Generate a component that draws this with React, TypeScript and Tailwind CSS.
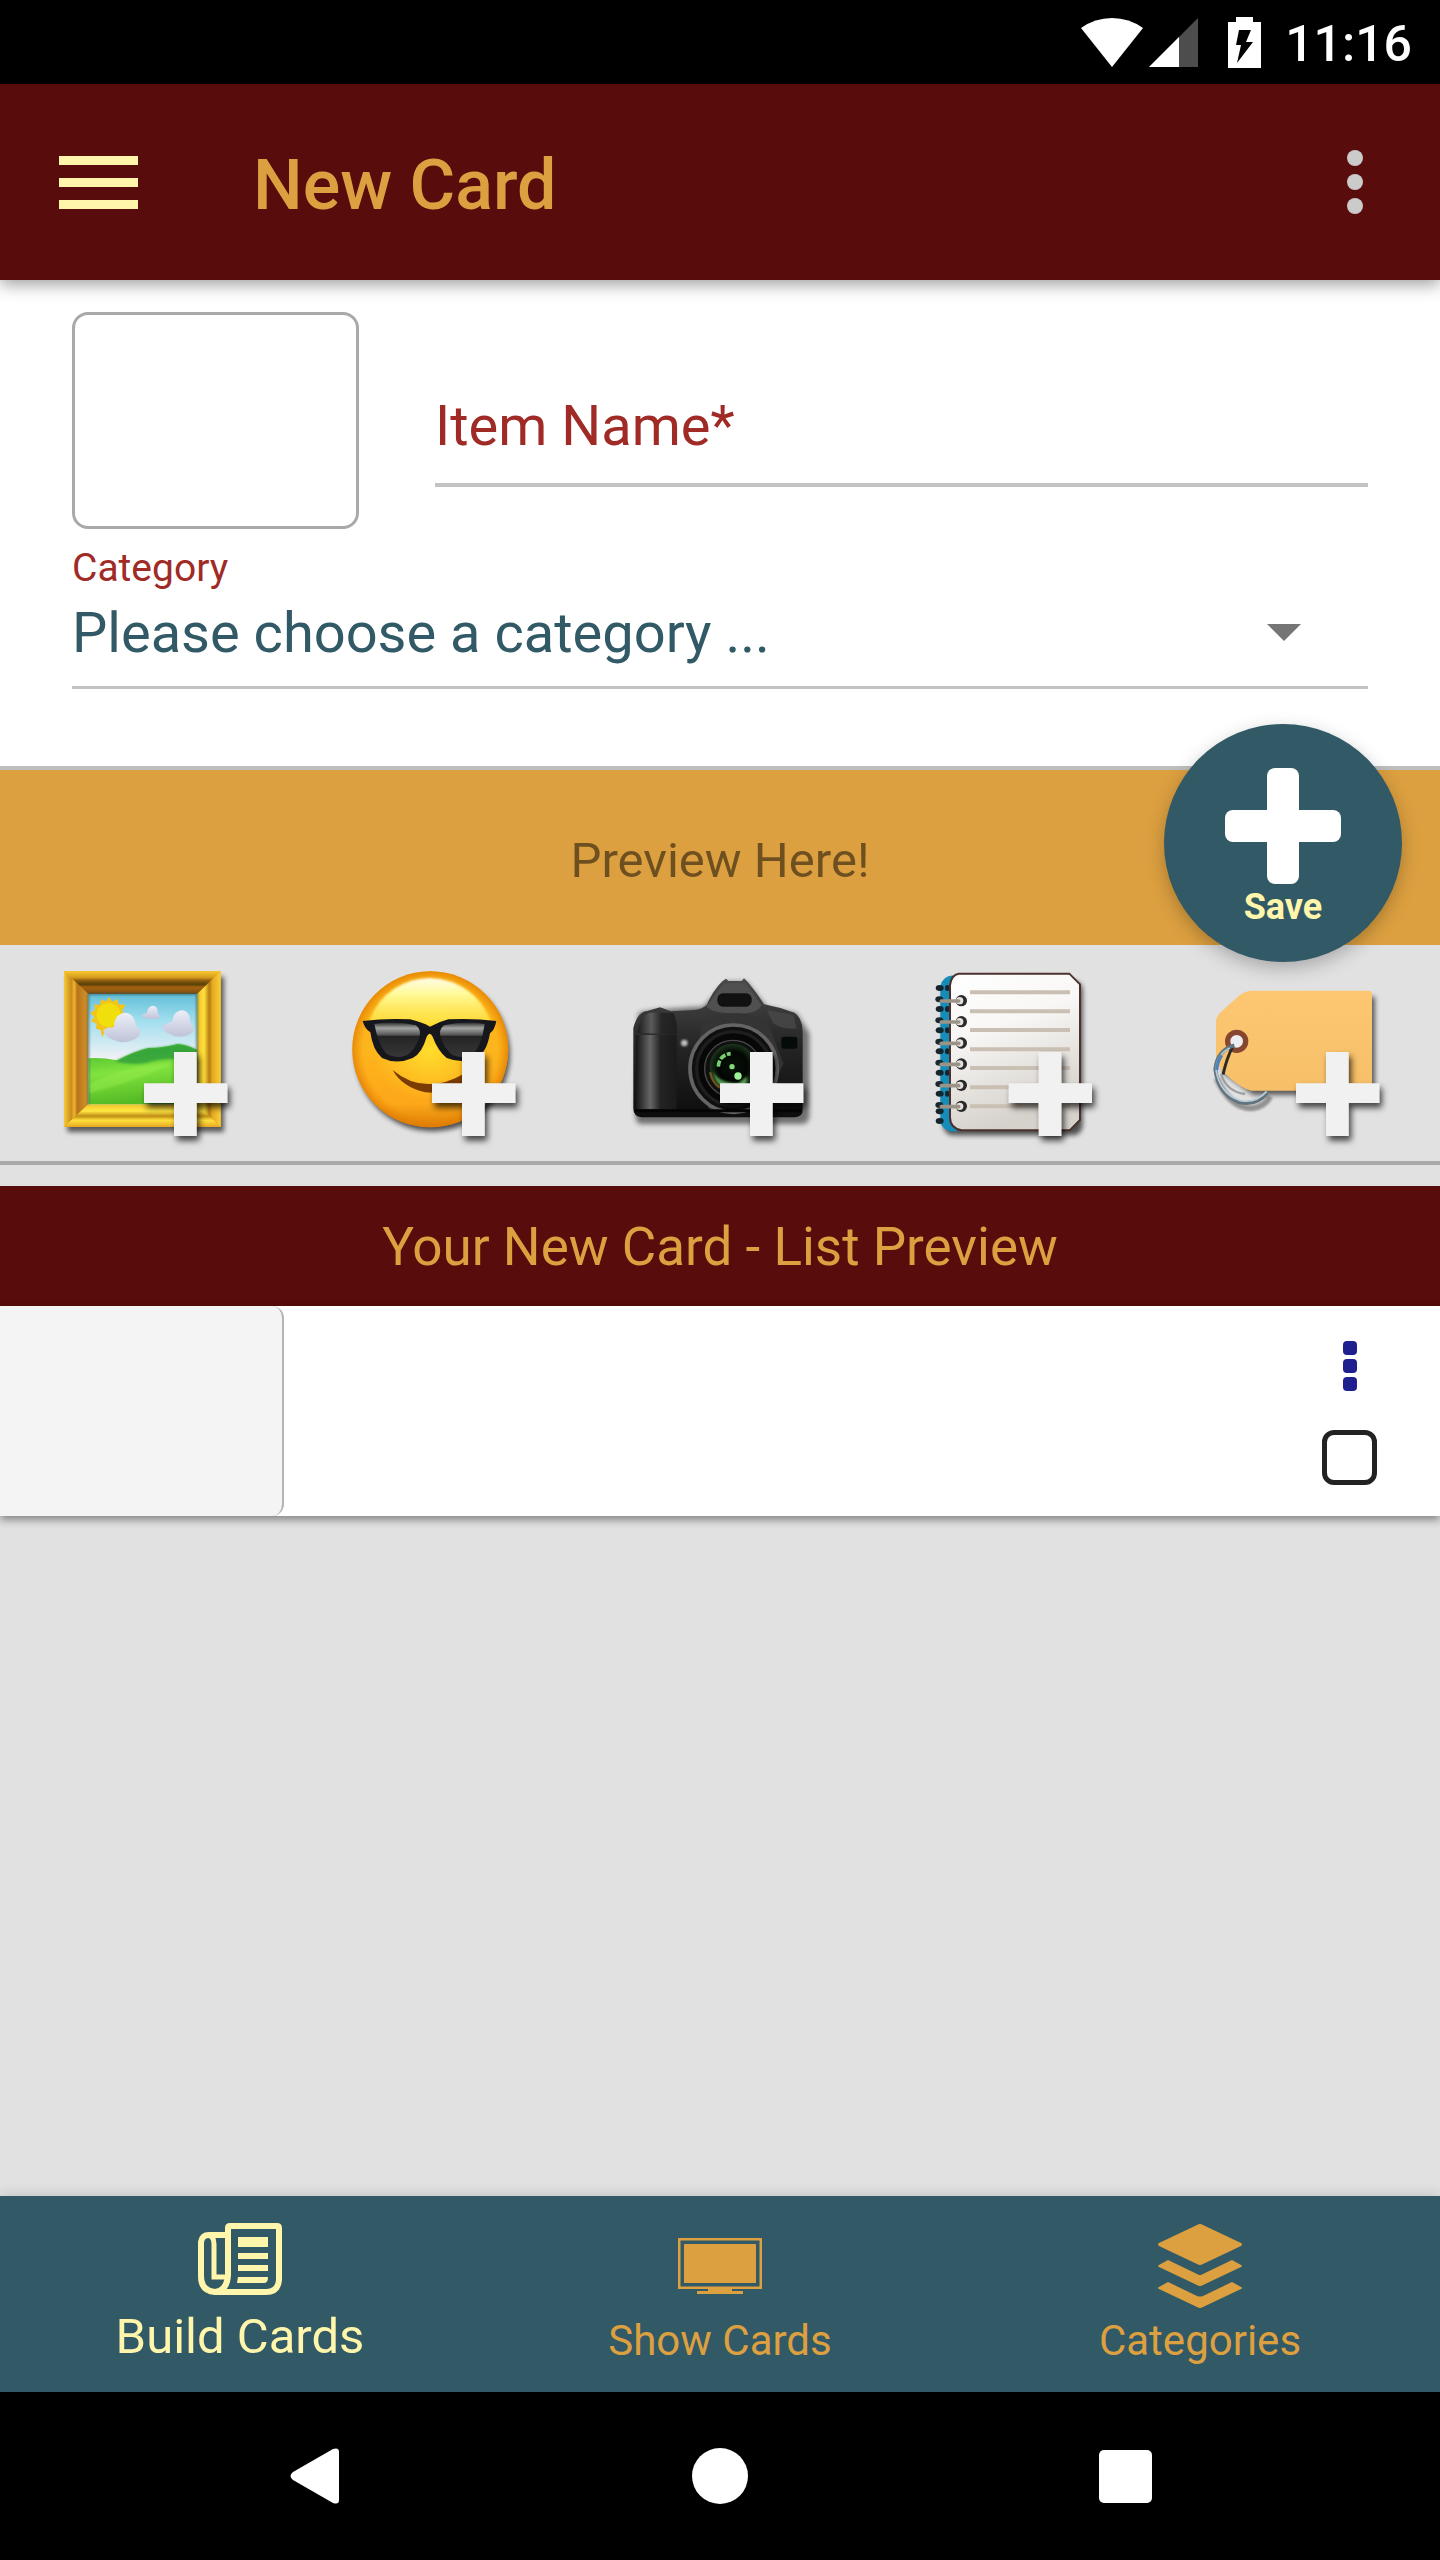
import React from "react";

function StatusBar() {
  return (
    <div className="flex h-[84px] shrink-0 items-center justify-end bg-black pr-7 text-white">
      <svg className="h-[51px] w-[180px]" viewBox="0 0 180 51" aria-hidden="true">
        <path d="M0 11 Q14 1 31 1 Q48 1 62 11 L31 50 Z" fill="#fff" />
        <path d="M117 1 V50 H68 Z" fill="#4d4d4d" />
        <path d="M98 20 V50 H68 Z" fill="#fff" />
        <path d="M147 5 H155 V0 H172 V5 H180 V51 H147 Z" fill="#fff" />
        <path d="M158 13 H170 L165 25 H172 L156 46 L160 28 H155 Z" fill="#000" />
      </svg>
      <span className="ml-6 pt-1 text-[50px] leading-none font-medium">11:16</span>
    </div>
  );
}

function Header() {
  return (
    <header className="relative z-10 flex h-[196px] shrink-0 items-center bg-[#580c0b] pr-[69px] pl-[59px] shadow-[0_4px_16px_rgba(0,0,0,0.4)]">
      <button type="button" aria-label="Open menu" className="flex w-[79px] flex-col gap-[13px]">
        <span className="h-[9px] bg-[#fff6ac]" />
        <span className="h-[9px] bg-[#fff6ac]" />
        <span className="h-[9px] bg-[#fff6ac]" />
      </button>
      <h1 className="ml-[115px] flex-1 pt-[6px] text-[70px] leading-none font-medium text-[#dda040]">New Card</h1>
      <button type="button" aria-label="More options" className="flex w-8 flex-col items-center gap-2">
        <span className="size-4 rounded-full bg-[#cbcbcb]" />
        <span className="size-4 rounded-full bg-[#cbcbcb]" />
        <span className="size-4 rounded-full bg-[#cbcbcb]" />
      </button>
    </header>
  );
}

function CardForm() {
  return (
    <form className="flex flex-col bg-white px-[72px] pt-8 pb-[77px]">
      <div className="flex items-end gap-[76px]">
        <button
          type="button"
          aria-label="Card image"
          className="h-[217px] w-[287px] shrink-0 rounded-2xl border-[3px] border-[#a9a9a9]"
        />
        <input
          id="item-name"
          type="text"
          aria-label="Item Name"
          placeholder="Item Name*"
          className="mb-[42px] h-[106px] min-w-0 flex-1 border-b-4 border-[#c3c3c3] pb-3 text-[56px] text-[#a02a26] outline-none placeholder:text-[#a02a26]"
        />
      </div>
      <label htmlFor="category" className="mt-4 text-[39px] leading-[46px] text-[#a02a26]">Category</label>
      <div className="relative flex">
        <select
          id="category"
          className="h-[98px] w-full appearance-none border-b-[3px] border-[#c3c3c3] bg-white pb-[11px] text-[56px] text-[#325966] outline-none"
        >
          <option>Please choose a category ...</option>
        </select>
        <svg className="pointer-events-none absolute top-[33px] right-[67px] h-[17px] w-[34px]" viewBox="0 0 34 17" aria-hidden="true">
          <path d="M0 0 H34 L17 17 Z" fill="#757575" />
        </svg>
      </div>
    </form>
  );
}

function SaveButton() {
  return (
    <button
      type="button"
      className="absolute -top-[46px] right-[38px] z-10 flex size-[238px] flex-col items-center rounded-full bg-[#325966] pt-11 shadow-[0_6px_18px_rgba(0,0,0,0.25)]"
    >
      <svg className="size-[116px]" viewBox="0 0 116 116" aria-hidden="true">
        <rect x="42" width="32" height="116" rx="8" fill="#fff" />
        <rect y="42" width="116" height="32" rx="8" fill="#fff" />
      </svg>
      <span className="text-[36px] leading-[46px] font-bold text-[#fff6ac]">Save</span>
    </button>
  );
}

function Plus({ x }: { x: number }) {
  return (
    <path
      transform={`translate(${x} 306)`}
      d="M90 0 H158 V94 H250 V153 H158 V252 H90 V153 H0 V94 H90 Z"
      fill="#f1f1f1"
      filter="url(#drop)"
    />
  );
}

function SharedDefs() {
  return (
    <svg className="absolute size-0" aria-hidden="true">
      <defs>
        <filter id="drop" x="-20%" y="-20%" width="150%" height="150%">
          <feDropShadow dx="8" dy="14" stdDeviation="9" floodColor="#000" floodOpacity="0.7" />
        </filter>
        <filter id="soft" x="-20%" y="-20%" width="140%" height="140%">
          <feGaussianBlur stdDeviation="3" />
        </filter>
        <filter id="softer" x="-30%" y="-30%" width="160%" height="160%">
          <feGaussianBlur stdDeviation="8" />
        </filter>
        <linearGradient id="frameL" x1="0" x2="1">
          <stop offset="0" stopColor="#f5ca38" />
          <stop offset="0.3" stopColor="#c98c1c" />
          <stop offset="0.42" stopColor="#f0b52b" />
          <stop offset="0.55" stopColor="#b8741b" />
          <stop offset="1" stopColor="#d8952b" />
        </linearGradient>
        <linearGradient id="frameR" x1="0" x2="1">
          <stop offset="0" stopColor="#eebf27" />
          <stop offset="0.3" stopColor="#ffe13a" />
          <stop offset="0.52" stopColor="#b77b13" />
          <stop offset="0.65" stopColor="#e3a923" />
          <stop offset="1" stopColor="#fbce36" />
        </linearGradient>
        <linearGradient id="frameT" x1="0" x2="0" y1="0" y2="1">
          <stop offset="0" stopColor="#f7c832" />
          <stop offset="0.28" stopColor="#d69a1d" />
          <stop offset="0.42" stopColor="#8c5c0e" />
          <stop offset="0.58" stopColor="#594009" />
          <stop offset="0.7" stopColor="#a3610f" />
          <stop offset="1" stopColor="#80500e" />
        </linearGradient>
        <linearGradient id="frameB" x1="0" x2="0" y1="0" y2="1">
          <stop offset="0" stopColor="#f0c429" />
          <stop offset="0.3" stopColor="#ffe844" />
          <stop offset="0.52" stopColor="#c08c15" />
          <stop offset="0.7" stopColor="#ffe13c" />
          <stop offset="1" stopColor="#e6a722" />
        </linearGradient>
        <linearGradient id="sky" x1="0" x2="0" y1="0" y2="1">
          <stop offset="0" stopColor="#62bfd8" />
          <stop offset="0.25" stopColor="#a3dfef" />
          <stop offset="0.6" stopColor="#f3f2f5" />
        </linearGradient>
        <linearGradient id="grass" x1="0" x2="0.2" y1="0" y2="1">
          <stop offset="0" stopColor="#43b52c" />
          <stop offset="0.5" stopColor="#81e33e" />
          <stop offset="1" stopColor="#55bb25" />
        </linearGradient>
        <linearGradient id="cloud" x1="0" x2="0" y1="0" y2="1">
          <stop offset="0" stopColor="#eceef8" />
          <stop offset="1" stopColor="#bfc3d8" />
        </linearGradient>
        <linearGradient id="face" x1="0" x2="0" y1="0" y2="1">
          <stop offset="0" stopColor="#fcb414" />
          <stop offset="0.5" stopColor="#fdb51d" />
          <stop offset="0.85" stopColor="#fda719" />
          <stop offset="1" stopColor="#dc7f06" />
        </linearGradient>
        <radialGradient id="faceGlow">
          <stop offset="0" stopColor="#ffdc2c" />
          <stop offset="1" stopColor="#ffdc2c" stopOpacity="0" />
        </radialGradient>
        <radialGradient id="faceEdge">
          <stop offset="0.86" stopColor="#e98706" stopOpacity="0" />
          <stop offset="1" stopColor="#e07a02" stopOpacity="0.75" />
        </radialGradient>
        <linearGradient id="shine" x1="0" x2="0" y1="0" y2="1">
          <stop offset="0" stopColor="#fffde6" />
          <stop offset="0.35" stopColor="#fffa96" />
          <stop offset="1" stopColor="#ffec43" stopOpacity="0.6" />
        </linearGradient>
        <linearGradient id="lens" x1="0" x2="0" y1="0" y2="1">
          <stop offset="0" stopColor="#2d2e2e" />
          <stop offset="0.16" stopColor="#a3a5a3" />
          <stop offset="0.36" stopColor="#555" />
          <stop offset="0.4" stopColor="#242424" />
          <stop offset="1" stopColor="#373737" />
        </linearGradient>
        <linearGradient id="body" x1="0" x2="0" y1="0" y2="1">
          <stop offset="0" stopColor="#4b4b4b" />
          <stop offset="0.5" stopColor="#242424" />
          <stop offset="1" stopColor="#0d0d0d" />
        </linearGradient>
        <linearGradient id="grip" x1="0" x2="1">
          <stop offset="0" stopColor="#161616" />
          <stop offset="0.35" stopColor="#666" />
          <stop offset="0.6" stopColor="#242424" />
          <stop offset="1" stopColor="#1a1a1a" />
        </linearGradient>
        <radialGradient id="glass">
          <stop offset="0" stopColor="#071208" />
          <stop offset="0.65" stopColor="#030603" />
          <stop offset="1" stopColor="#1c361b" />
        </radialGradient>
        <linearGradient id="paper" x1="0" x2="0.3" y1="0" y2="1">
          <stop offset="0" stopColor="#fff" />
          <stop offset="0.4" stopColor="#f8f7f5" />
          <stop offset="1" stopColor="#d5d1cb" />
        </linearGradient>
        <linearGradient id="tag" x1="0" x2="0" y1="0" y2="1">
          <stop offset="0" stopColor="#fdc772" />
          <stop offset="1" stopColor="#f6bf68" />
        </linearGradient>
      </defs>
    </svg>
  );
}

function PictureIcon() {
  return (
    <g transform="translate(18 0)">
      <rect x="82" y="80" width="470" height="466" fill="#000" opacity="0.6" filter="url(#softer)" />
      <rect x="72" y="63" width="470" height="468" fill="#e3aa25" />
      <path d="M72 63 L145 132 V463 L72 531 Z" fill="url(#frameL)" />
      <path d="M542 63 L471 132 V463 L542 531 Z" fill="url(#frameR)" />
      <path d="M72 63 H542 L471 132 H145 Z" fill="url(#frameT)" />
      <path d="M72 531 H542 L471 463 H145 Z" fill="url(#frameB)" />
      <rect x="145" y="132" width="326" height="331" fill="url(#sky)" />
      <path d="M208 142 L217 155 L233 146 L235 162 L257 165 L246 182 L258 196 L244 208 L246 226 L226 226 L214 240 L203 231 L186 262 L182 240 L167 236 L170 221 L153 214 L163 201 L151 188 L165 179 L163 163 L180 165 L183 148 L198 154 Z" fill="#f3c51b" />
      <circle cx="206" cy="195" r="36" fill="#f0df0d" />
      <path d="M222 232 Q222 192 255 188 Q284 190 287 226 Q304 239 298 258 Q275 278 242 277 Q190 263 190 240 Q205 230 222 232 Z" fill="url(#cloud)" />
      <path d="M320 190 Q324 166 341 167 Q354 169 353 189 Q360 194 358 204 Q339 213 307 200 Q304 192 320 190 Z" fill="url(#cloud)" />
      <path d="M397 214 Q400 184 426 181 Q451 184 451 218 Q461 225 460 243 Q447 264 403 259 Q368 245 366 232 Q378 220 397 214 Z" fill="url(#cloud)" />
      <path d="M145 325 Q185 322 231 331 Q280 305 324 294 Q360 295 414 282 Q445 286 471 299 V463 H145 Z" fill="url(#grass)" />
      <path d="M231 331 Q280 305 324 294 Q360 295 414 282 Q445 286 471 299 V330 Q380 320 320 338 Q270 348 225 334 Z" fill="#2c9a3c" opacity="0.75" filter="url(#soft)" />
      <path d="M145 404 Q250 345 400 338 Q300 390 145 430 Z" fill="#96ec4c" opacity="0.5" filter="url(#soft)" />
      <path d="M145 463 V132 H471 V463" fill="none" stroke="#2d5360" strokeWidth="6" opacity="0.65" filter="url(#soft)" />
      <Plus x={312} />
    </g>
  );
}

function SmileyIcon() {
  return (
    <g transform="translate(24 0)">
      <circle cx="308" cy="312" r="232" fill="#000" opacity="0.65" filter="url(#softer)" />
      <circle cx="301" cy="298" r="234" fill="url(#face)" />
      <ellipse cx="300" cy="300" rx="170" ry="150" fill="url(#faceGlow)" />
      <circle cx="301" cy="298" r="234" fill="url(#faceEdge)" />
      <path d="M118 214 Q140 150 195 115 Q245 84 300 84 Q365 86 415 123 Q462 158 482 214 L420 226 H175 Z" fill="url(#shine)" filter="url(#soft)" />
      <path d="M188 360 Q240 404 300 402 Q350 402 400 372 L410 410 Q350 432 285 427 Q215 410 188 360 Z" fill="#7a3c02" />
      <path d="M98 213 Q170 204 240 208 Q275 216 300 230 Q325 216 355 208 Q430 204 499 213 Q494 240 480 250 Q470 310 438 324 Q395 342 350 324 Q322 300 308 260 Q299 242 290 260 Q276 310 248 324 Q200 345 156 324 Q128 300 121 247 Q104 236 98 213 Z" fill="#15171c" />
      <path d="M133 222 Q200 212 258 226 Q275 240 268 262 Q255 300 232 315 Q200 328 170 312 Q145 285 133 222 Z" fill="url(#lens)" />
      <path d="M464 222 Q400 212 342 226 Q325 240 332 262 Q345 300 368 315 Q400 328 430 312 Q455 285 464 222 Z" fill="url(#lens)" />
      <Plus x={306} />
    </g>
  );
}

function CameraIcon() {
  return (
    <g>
      <path d="M85 190 Q90 180 280 170 L350 95 H410 L470 170 L560 190 L598 250 V500 Q595 524 570 522 H90 Q74 520 76 480 Z" fill="#000" opacity="0.5" filter="url(#softer)" />
      <path d="M70 235 Q82 185 112 183 L150 172 L183 184 L252 180 Q275 178 290 165 Q310 120 337 94 L348 86 L356 93 H395 L402 85 L414 97 Q440 128 462 163 Q510 172 553 188 Q580 205 578 260 V480 Q578 500 555 502 H95 Q70 500 70 475 Z" fill="url(#body)" />
      <path d="M78 255 H200 V478 H78 Z" fill="url(#grip)" />
      <path d="M82 248 Q90 194 120 188 H190 Q205 220 200 254 Z" fill="url(#grip)" opacity="0.8" />
      <path d="M290 170 Q330 110 345 100 H405 Q430 130 455 165 Q440 195 375 190 Q310 190 290 170 Z" fill="#505050" />
      <rect x="322" y="130" width="103" height="40" rx="17" fill="#111" />
      <path d="M275 230 Q310 190 375 190 Q440 190 480 235 L520 340 L460 480 H300 L240 380 Z" fill="#343434" />
      <path d="M470 180 L550 195 L560 235 Q520 240 490 220 Z" fill="#484848" opacity="0.8" />
      <rect x="514" y="260" width="48" height="36" rx="8" fill="#050b09" />
      <circle cx="371" cy="356" r="131" fill="#0f0f0f" stroke="#646464" strokeWidth="11" />
      <circle cx="371" cy="356" r="111" fill="#070707" stroke="#1e1e1e" strokeWidth="10" />
      <circle cx="369" cy="356" r="85" fill="#101010" stroke="#494949" strokeWidth="4" />
      <circle cx="368" cy="350" r="69" fill="url(#glass)" />
      <path d="M308 363 Q325 400 385 400 L410 380 Q418 410 370 419 Q320 418 308 363 Z" fill="#559e52" filter="url(#soft)" />
      <path d="M325 350 Q327 315 362 311" fill="none" stroke="#75ce70" strokeWidth="11" strokeDasharray="19 5" />
      <circle cx="366" cy="350" r="8" fill="#81d97b" />
      <circle cx="384" cy="378" r="11" fill="#9cf396" />
      <path d="M300 367 Q307 398 329 413" fill="none" stroke="#9b6b20" strokeWidth="7" opacity="0.7" />
      <circle cx="223" cy="279" r="10" fill="#bdbdbd" filter="url(#soft)" />
      <path d="M74 482 H575" stroke="#050505" strokeWidth="9" />
      <Plus x={330} />
    </g>
  );
}

const ringRows = [152, 215, 279, 342, 406, 469];
const ruleRows = [127, 184, 240, 298, 354, 412, 469];

function NotebookIcon() {
  return (
    <g transform="translate(36 0)">
      <rect x="100" y="92" width="418" height="464" rx="30" fill="#000" opacity="0.65" filter="url(#softer)" />
      <path d="M130 76 Q96 78 91 110 V515 Q98 545 140 545 Z" fill="#168db8" />
      {ringRows.map((y) => (
        <g key={y}>
          <ellipse cx="89" cy={y - 38} rx="12" ry="9" fill="#15252d" />
          <ellipse cx="112" cy={y - 38} rx="7" ry="9" fill="#15252d" />
          <ellipse cx="88" cy={y - 4} rx="12" ry="9" fill="#19282e" />
        </g>
      ))}
      <ellipse cx="89" cy="484" rx="12" ry="9" fill="#15252d" />
      <ellipse cx="89" cy="513" rx="12" ry="9" fill="#15252d" />
      <path d="M146 71 H478 L510 103 V510 L479 541 H155 Q120 535 120 502 V105 Q124 75 146 71 Z" fill="url(#paper)" stroke="#4c302d" strokeWidth="6" />
      {ruleRows.map((y) => (
        <path key={y} d={`M180 ${y} H480`} stroke="#cabfb3" strokeWidth="12" />
      ))}
      {ringRows.map((y) => (
        <g key={y}>
          <circle cx="154" cy={y} r="17" fill="#292929" />
          <circle cx="149" cy={y} r="11" fill="#e4e2df" />
          <path d={`M94 ${y + 1} H146`} stroke="#9c9387" strokeWidth="11" strokeLinecap="round" />
        </g>
      ))}
      <Plus x={296} />
    </g>
  );
}

function TagIcon() {
  return (
    <g transform="translate(12 0)">
      <path d="M92 220 L180 140 H555 V435 H190 L100 370 Z" fill="#000" opacity="0.6" filter="url(#softer)" />
      <path d="M80 385 Q120 475 185 475 Q225 470 240 440" fill="none" stroke="#000" strokeWidth="18" opacity="0.35" filter="url(#soft)" />
      <path d="M182 122 H537 Q546 123 546 133 V422 H184 Q150 415 104 370 Q78 345 78 325 V215 Q78 198 95 184 L142 142 Q160 124 182 122 Z" fill="url(#tag)" />
      <circle cx="140" cy="274" r="27" fill="#eceef1" stroke="#87472e" strokeWidth="16" />
      <path d="M128 290 Q110 325 99 374" fill="none" stroke="#2e2923" strokeWidth="9" />
      <path d="M133 286 Q82 300 76 358 Q86 434 147 456 Q200 468 231 429" fill="none" stroke="#62747e" strokeWidth="12" />
      <path d="M119 294 Q79 315 78 360 Q90 430 148 451 Q195 463 230 424" fill="none" stroke="#b8cdd9" strokeWidth="5" />
      <path d="M95 316 Q82 334 80 360" fill="none" stroke="#4c83bb" strokeWidth="10" />
      <path d="M93 372 Q110 425 165 432" fill="none" stroke="#9b9ea0" strokeWidth="7" />
      <Plus x={318} />
    </g>
  );
}

const tools = [
  { label: "Add picture", Icon: PictureIcon },
  { label: "Add emoji", Icon: SmileyIcon },
  { label: "Add photo", Icon: CameraIcon },
  { label: "Add note", Icon: NotebookIcon },
  { label: "Add tag", Icon: TagIcon },
];

function ToolBar() {
  return (
    <div className="grid grid-cols-5 border-b-4 border-[#a8aaa9]">
      {tools.map(({ label, Icon }) => (
        <button key={label} type="button" aria-label={label} className="flex justify-center">
          <svg className="h-[216px] w-[220px]" viewBox="0 -15 660 648" aria-hidden="true">
            <Icon />
          </svg>
        </button>
      ))}
    </div>
  );
}

function ListPreview() {
  return (
    <section className="mt-[21px]">
      <h2 className="flex h-[120px] items-center justify-center bg-[#580c0b] pt-[3px] text-[53px] leading-none text-[#dda040]">
        Your New Card - List Preview
      </h2>
      <div className="flex h-[210px] items-stretch bg-white shadow-[0_4px_8px_rgba(0,0,0,0.4)]">
        <div className="w-[284px] rounded-r-xl border-r-2 border-[#b4b4b4] bg-[#f4f4f4]" />
        <div className="ml-auto flex flex-col items-center pt-[35px] pr-[63px]">
          <button type="button" aria-label="Card options" className="flex flex-col items-center gap-1">
            <span className="size-[14px] rounded-[4px] bg-[#1f1f8f]" />
            <span className="size-[14px] rounded-[4px] bg-[#1f1f8f]" />
            <span className="size-[14px] rounded-[4px] bg-[#1f1f8f]" />
          </button>
          <input
            type="checkbox"
            aria-label="Select card"
            className="mt-[39px] size-[55px] appearance-none rounded-xl border-[5px] border-[#222]"
          />
        </div>
      </div>
    </section>
  );
}

function BottomTabs() {
  return (
    <nav className="relative grid h-[196px] shrink-0 grid-cols-3 bg-[#325966] leading-none text-[#dda040] shadow-[0_-2px_12px_rgba(0,0,0,0.12)]">
      <a href="#build" className="flex flex-col items-center pt-[27px] text-[49px] text-[#fff6ac]">
        <svg className="h-[72px] w-[84px]" viewBox="0 0 84 72" fill="none" aria-hidden="true">
          <g stroke="#fff6ac" strokeWidth="6">
            <path d="M30 12 V5 Q30 3 32 3 H79 Q81 3 81 5 V57 Q80 69 68 69 H17 Q3 68 3 53 V19 Q4 12 11 12 H30" />
            <path d="M30 12 V52 Q29 68 17 69" />
            <path d="M10 12 Q16 13 16 21 V54 H30" strokeWidth="5" />
          </g>
          <path d="M40 14 H70 V24 H40 Z M40 30 H70 V36 H40 Z M40 42 H70 V48 H40 Z M40 54 H70 Q70 60 66 60 H39 Z" fill="#fff6ac" />
        </svg>
        <span className="mt-[17px]">Build Cards</span>
      </a>
      <a href="#show" className="flex flex-col items-center pt-[42px] text-[42px]">
        <svg className="h-[56px] w-[84px]" viewBox="0 0 84 56" aria-hidden="true">
          <rect x="1.25" y="1.25" width="81.5" height="48.5" fill="none" stroke="#dda040" strokeWidth="2.5" />
          <rect x="6" y="6" width="72" height="39" fill="#dda040" />
          <path d="M30 50 H54 V53 H65 V56 H19 V53 H30 Z" fill="#dda040" />
        </svg>
        <span className="mt-[26px]">Show Cards</span>
      </a>
      <a href="#categories" className="flex flex-col items-center pt-7 text-[42px]">
        <svg className="size-[84px]" viewBox="0 0 84 84" fill="#dda040" aria-hidden="true">
          <path d="M39 1 Q42 -1 45 1 L83 19 Q85 20 83 22 L45 40 Q42 42 39 40 L1 22 Q-1 20 1 19 Z" />
          <path d="M10 36 L39 50 Q42 52 45 50 L74 36 L83 41 Q85 42 83 43 L45 61 Q42 63 39 61 L1 43 Q-1 42 1 41 Z" />
          <path d="M10 58 L39 72 Q42 73 45 72 L74 58 L83 63 Q85 64 83 65 L45 83 Q42 85 39 83 L1 65 Q-1 64 1 63 Z" />
        </svg>
        <span className="mt-3">Categories</span>
      </a>
    </nav>
  );
}

function SystemNav() {
  return (
    <div className="grid h-[168px] shrink-0 grid-cols-3 bg-black px-[112px]">
      <button type="button" aria-label="Back" className="flex items-center justify-center">
        <svg className="h-[56px] w-[49px]" viewBox="0 0 49 56" aria-hidden="true">
          <path d="M43 1 Q49 -1 49 4 V52 Q49 57 43 55 L3 32 Q-2 28 3 24 Z" fill="#fff" />
        </svg>
      </button>
      <button type="button" aria-label="Home" className="flex items-center justify-center">
        <span className="size-14 rounded-full bg-white" />
      </button>
      <button type="button" aria-label="Recent apps" className="flex items-center justify-center">
        <span className="size-[53px] rounded-[5px] bg-white" />
      </button>
    </div>
  );
}

export default function App() {
  return (
    <div className="flex min-h-screen flex-col bg-[#e1e1e1] font-[Roboto,sans-serif]">
      <SharedDefs />
      <StatusBar />
      <Header />
      <main className="flex-1">
        <CardForm />
        <section className="relative flex h-[179px] items-center justify-center border-t-4 border-[#bebebe] bg-[#dda040] pt-[6px]">
          <p className="text-[49px] leading-none text-black/50">Preview Here!</p>
          <SaveButton />
        </section>
        <ToolBar />
        <ListPreview />
      </main>
      <BottomTabs />
      <SystemNav />
    </div>
  );
}
